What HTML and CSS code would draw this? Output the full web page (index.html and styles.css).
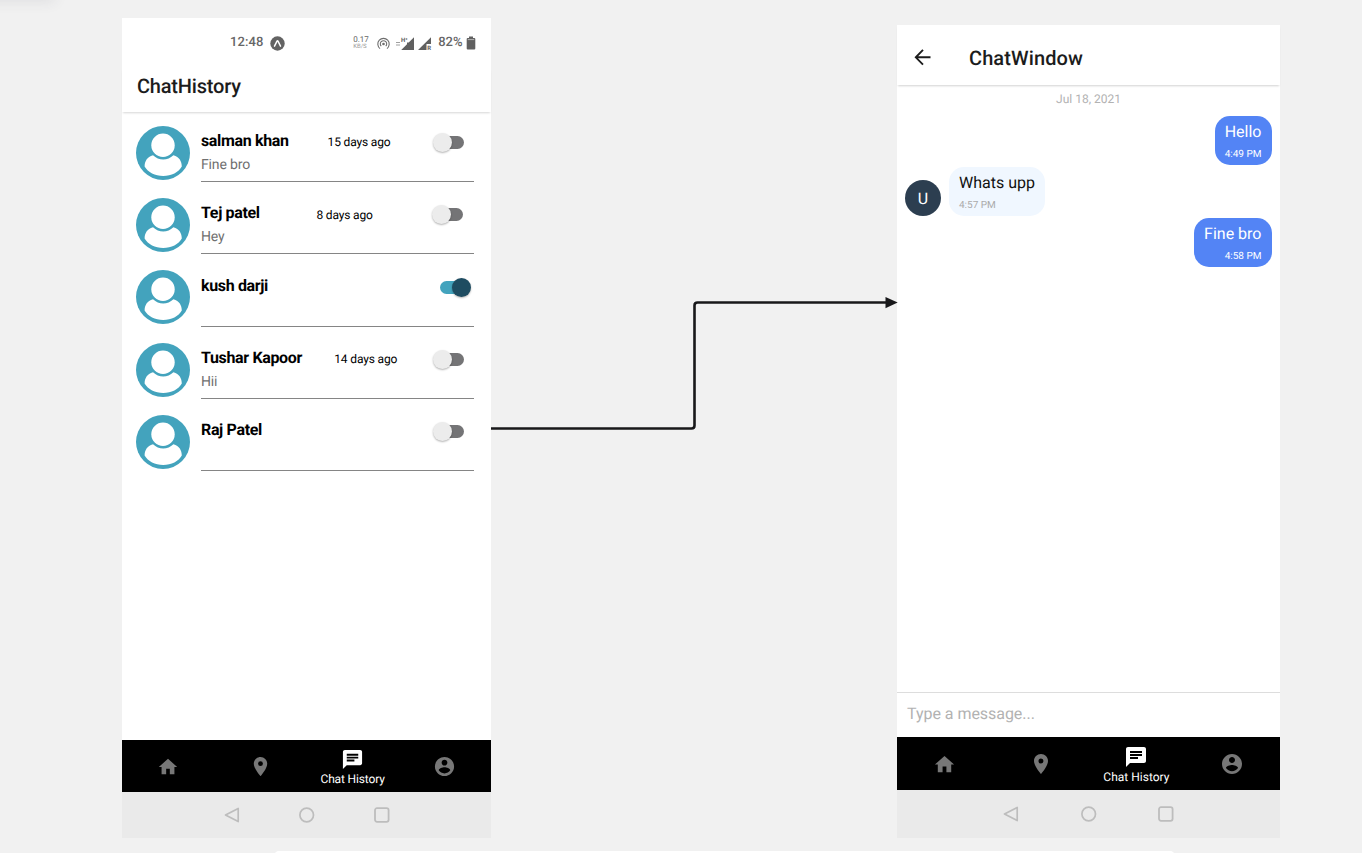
FILE: index.html
```
<!DOCTYPE html>
<html lang="en">
<head>
<meta charset="utf-8">
<title>Chat flow</title>
<link rel="stylesheet" href="styles.css">
</head>
<body>
<svg class="defs" width="0" height="0">
  <symbol id="avatar" viewBox="0 0 54 54">
    <circle cx="27" cy="27" r="27" fill="#43a3bd"/>
    <circle cx="27" cy="19.300" r="11.700" fill="#fff"/>
    <path d="M17 29.300C11 31 8.600 35.500 8.600 40.500C12 46.300 19 50 27.200 50S42.600 46.300 45.800 40.500C45.800 35.500 43.400 31 37.400 29.300C34.500 32 31 33.600 27.200 33.600S20 32 17 29.300Z" fill="#fff"/>
  </symbol>
  <symbol id="home" viewBox="0 0 24 24"><path d="M10 20v-6h4v6h5v-8h3L12 3 2 12h3v8z"/></symbol>
  <symbol id="pin" viewBox="0 0 24 24"><path d="M12 2C8.130 2 5 5.130 5 9c0 5.250 7 13 7 13s7-7.750 7-13c0-3.870-3.130-7-7-7zm0 9.500a2.500 2.500 0 1 1 0-5 2.500 2.500 0 0 1 0 5z"/></symbol>
  <symbol id="chat" viewBox="0 0 24 24"><path d="M20 2H4c-1.100 0-1.990.9-1.990 2L2 22l4-4h14c1.100 0 2-.9 2-2V4c0-1.100-.9-2-2-2zM6 9h12v2H6V9zm8 5H6v-2h8v2zm4-6H6V6h12v2z"/></symbol>
  <symbol id="account" viewBox="0 0 24 24"><path d="M12 2C6.480 2 2 6.480 2 12s4.480 10 10 10 10-4.480 10-10S17.520 2 12 2zm0 3c1.660 0 3 1.340 3 3s-1.340 3-3 3-3-1.340-3-3 1.340-3 3-3zm0 14.200c-2.500 0-4.710-1.280-6-3.220.03-1.990 4-3.080 6-3.080 1.990 0 5.970 1.090 6 3.080-1.290 1.940-3.500 3.220-6 3.220z"/></symbol>
  <symbol id="nav-back" viewBox="0 0 16 16"><path d="M14.200 1.400V14.600L1.500 8Z" fill="none" stroke="#bdbdbd" stroke-width="1.700" stroke-linejoin="round"/></symbol>
  <symbol id="nav-home" viewBox="0 0 16 16"><circle cx="7.700" cy="8" r="6.800" fill="none" stroke="#bdbdbd" stroke-width="1.700"/></symbol>
  <symbol id="nav-recent" viewBox="0 0 16 16"><rect x="1" y="1.200" width="13.600" height="13.600" rx="2" fill="none" stroke="#bdbdbd" stroke-width="1.800"/></symbol>
</svg>

<main class="canvas">
  <div class="corner-shadow"></div>

  <section class="phone phone-history">
    <div class="status">
      <div class="status-left">
        <span class="clock">12:48</span>
        <svg width="15" height="15" viewBox="0 0 15 15"><circle cx="7.500" cy="7.500" r="7.200" fill="#636363"/><path d="M4.500 10.200L7 5.200Q7.500 4.500 8 5.200L10.500 10.200" fill="none" stroke="#fff" stroke-width="1.500" stroke-linecap="round"/></svg>
      </div>
      <div class="status-right">
        <div class="speed"><span>0.17</span><span class="unit">KB/S</span></div>
        <svg class="hotspot" width="13" height="13" viewBox="0 0 13 13" fill="none" stroke="#6d6d6d"><circle cx="6.500" cy="7" r="1.300" fill="#6d6d6d" stroke="none"/><path d="M4.300 9.200A3.200 3.200 0 1 1 8.700 9.200M3 11.600A5.700 5.700 0 1 1 10 11.600" stroke-width="1.100"/></svg>
        <svg class="signal-one" width="20" height="15" viewBox="0 0 20 15"><path d="M1 6.500h4M1 9h4" stroke="#a0a0a0"/><path d="M19 1.200V14H6.200L12 8.200V6.500H13.700Z" fill="#606060"/><text x="6" y="6" class="signal-label">H⁺</text></svg>
        <svg class="signal-two" width="14" height="15" viewBox="0 0 14 15"><path d="M13 1.200V8H8.500v6H0Z" fill="#606060"/><text x="9.200" y="14" class="signal-label">R</text></svg>
        <span class="charge">82%</span>
        <svg class="battery" width="10" height="14" viewBox="0 0 10 14"><path d="M3 .5h4V2h1.200Q9.300 2 9.300 3V12.500Q9.300 13.500 8.200 13.500H1.800Q.7 13.500 .7 12.500V3Q.7 2 1.800 2H3Z" fill="#606060"/><path d="M1.800 3.600h6.400" stroke="#bbb" stroke-width=".9"/></svg>
      </div>
    </div>
    <h1 class="title">ChatHistory</h1>
    <div class="list">
      <article class="row">
        <svg class="avatar"><use href="#avatar"/></svg>
        <div class="row-body">
          <div class="row-top"><span class="name">salman khan</span><time class="ago">15 days ago</time><span class="switch"></span></div>
          <p class="preview">Fine bro</p>
        </div>
      </article>
      <article class="row">
        <svg class="avatar"><use href="#avatar"/></svg>
        <div class="row-body">
          <div class="row-top"><span class="name">Tej patel</span><time class="ago">8 days ago</time><span class="switch"></span></div>
          <p class="preview">Hey</p>
        </div>
      </article>
      <article class="row">
        <svg class="avatar"><use href="#avatar"/></svg>
        <div class="row-body">
          <div class="row-top"><span class="name">kush darji</span><span class="switch on"></span></div>
        </div>
      </article>
      <article class="row">
        <svg class="avatar"><use href="#avatar"/></svg>
        <div class="row-body">
          <div class="row-top"><span class="name">Tushar Kapoor</span><time class="ago">14 days ago</time><span class="switch"></span></div>
          <p class="preview">Hii</p>
        </div>
      </article>
      <article class="row">
        <svg class="avatar"><use href="#avatar"/></svg>
        <div class="row-body">
          <div class="row-top"><span class="name">Raj Patel</span><span class="switch"></span></div>
        </div>
      </article>
    </div>
    <nav class="tabs">
      <span class="tab"><svg class="icon icon-home"><use href="#home"/></svg></span>
      <span class="tab"><svg class="icon"><use href="#pin"/></svg></span>
      <span class="tab active"><svg class="icon"><use href="#chat"/></svg><span class="tab-label">Chat History</span></span>
      <span class="tab"><svg class="icon"><use href="#account"/></svg></span>
    </nav>
    <div class="system-nav"><svg><use href="#nav-back"/></svg><svg><use href="#nav-home"/></svg><svg><use href="#nav-recent"/></svg></div>
  </section>

  <section class="phone phone-window">
    <header class="window-head">
      <svg class="back" width="18" height="18" viewBox="0 0 18 18" fill="none" stroke="#1c1c1c" stroke-width="1.900"><path d="M16.500 8.300H2M9 .9L1.800 8.300l7.200 7.400"/></svg>
      <h1 class="window-title">ChatWindow</h1>
    </header>
    <div class="messages">
      <p class="date">Jul 18, 2021</p>
      <div class="message sent"><div class="bubble"><p>Hello</p><time>4:49 PM</time></div></div>
      <div class="message received"><span class="initial">U</span><div class="bubble"><p>Whats upp</p><time>4:57 PM</time></div></div>
      <div class="message sent"><div class="bubble"><p>Fine bro</p><time>4:58 PM</time></div></div>
    </div>
    <div class="composer">Type a message...</div>
    <nav class="tabs">
      <span class="tab"><svg class="icon icon-home"><use href="#home"/></svg></span>
      <span class="tab"><svg class="icon"><use href="#pin"/></svg></span>
      <span class="tab active"><svg class="icon"><use href="#chat"/></svg><span class="tab-label">Chat History</span></span>
      <span class="tab"><svg class="icon"><use href="#account"/></svg></span>
    </nav>
    <div class="system-nav"><svg><use href="#nav-back"/></svg><svg><use href="#nav-home"/></svg><svg><use href="#nav-recent"/></svg></div>
  </section>

  <svg class="connector" width="408" height="142" viewBox="0 0 408 142">
    <path d="M0 133.500H200.500Q203.500 133.500 203.500 130.500V10.500Q203.500 7.500 206.500 7.500H396" fill="none" stroke="#18181a" stroke-width="2.600"/>
    <path d="M394.500 2L406.700 7.500 394.500 13.200Z" fill="#18181a"/>
  </svg>
  <div class="bottom-bar"></div>
</main>
</body>
</html>
```
FILE: styles.css
```
* { box-sizing: border-box; }
body { margin: 0; font-family: Roboto, sans-serif; background: #f1f1f1; text-rendering: geometricPrecision; }
h1, p { margin: 0; font-weight: 400; }
.defs { position: absolute; }
.canvas { position: relative; width: 1362px; height: 853px; overflow: hidden; background: #f1f1f1; }
.corner-shadow { position: absolute; left: -20px; top: -12px; width: 72px; height: 10px; box-shadow: 0 1px 14px 3px rgba(50, 50, 75, .09); }
.bottom-bar { position: absolute; left: 274px; top: 851px; width: 901px; height: 12px; border-radius: 5px; background: #fff; }
.connector { position: absolute; left: 491px; top: 295px; }

.phone { position: absolute; display: flex; flex-direction: column; background: #fff; }
.phone-history { left: 122px; top: 18px; width: 369px; height: 820px; }
.phone-window { left: 897px; top: 25px; width: 383px; height: 813px; }

.status { height: 50px; padding: 0 15.500px 0 108px; display: flex; align-items: center; justify-content: space-between; color: #666; font-size: 13px; line-height: 16px; font-weight: 500; letter-spacing: .1px; }
.status-left, .status-right { display: flex; align-items: center; }
.status-left { gap: 7px; }
.speed { display: flex; flex-direction: column; width: 16px; font-size: 8px; line-height: 8px; font-weight: 400; letter-spacing: 0; }
.unit { font-size: 6px; line-height: 6px; color: #999; }
.hotspot { margin-left: 7.500px; }
.signal-one { margin-left: 5.500px; }
.signal-two { margin-left: 3px; }
.signal-label { font-size: 6px; font-weight: 700; fill: #606060; letter-spacing: 0; }
.charge { margin-left: 6px; letter-spacing: 0; }
.battery { margin-left: 3px; }

.title { height: 44px; padding-left: 15px; line-height: 36px; font-size: 20px; font-weight: 500; letter-spacing: -.2px; color: #1c1c1c; box-shadow: 0 2px 2px -1px rgba(0, 0, 0, .16); }
.list { flex: 1; padding: 13.200px 17px 0 13.500px; display: flex; flex-direction: column; gap: 15.300px; }
.row { display: flex; gap: 11.500px; height: 57px; flex: none; }
.avatar { width: 54px; height: 54px; flex: none; margin-top: .5px; }
.row-body { flex: 1; border-bottom: 1px solid #858585; }
.row-top { display: flex; justify-content: space-between; align-items: center; height: 31px; }
.name { font-size: 16px; font-weight: 700; letter-spacing: -.35px; color: #000; }
.ago { font-size: 12px; letter-spacing: -.15px; color: #000; padding-top: 3.500px; }
.preview { font-size: 14px; line-height: 19.500px; letter-spacing: -.15px; color: #707070; }
.switch { display: flex; align-items: center; width: 44.500px; height: 20px; margin-top: 4px; padding-left: 10px; }
.switch::before { content: ""; width: 24px; height: 13px; border-radius: 7px; background: #747476; }
.switch::after { content: ""; width: 19px; height: 19px; margin-left: -31px; border-radius: 50%; background: #ececec; box-shadow: 0 1px 2px rgba(0, 0, 0, .3); }
.switch.on::before { background: #43a3bd; }
.switch.on::after { margin-left: -12px; background: #1e4c61; }

.tabs { display: flex; height: 52px; background: #000; color: #777; }
.tab { flex: 1; display: flex; flex-direction: column; align-items: center; justify-content: center; }
.icon { width: 23px; height: 23px; fill: currentColor; }
.icon-home { width: 22px; height: 22px; margin-top: 1px; }
.active { color: #fff; justify-content: flex-start; padding-top: 7.500px; }
.tab-label { font-size: 12px; line-height: 15px; margin-top: 1px; letter-spacing: -.15px; }
.system-nav { display: flex; justify-content: center; align-items: center; gap: 59px; height: 46px; background: #eaeaea; }
.system-nav svg { width: 16px; height: 16px; }

.window-head { display: flex; align-items: center; height: 60px; padding: 5px 17px 0; gap: 37px; box-shadow: 0 2px 2px -1px rgba(0, 0, 0, .18); }
.window-title { font-size: 20px; font-weight: 500; letter-spacing: .1px; color: #1c1c1c; }
.messages { flex: 1; padding: 6px 8px 5px; display: flex; flex-direction: column; gap: 2px; }
.date { height: 23px; line-height: 16px; text-align: center; font-size: 12px; color: #b2b2b2; }
.message { display: flex; align-items: flex-end; gap: 8px; }
.sent { justify-content: flex-end; }
.bubble { height: 49px; padding: 6px 10px 0; border-radius: 15px; background: #f0f7ff; color: #111; font-size: 16px; line-height: 20px; display: flex; flex-direction: column; }
.bubble time { margin-top: 5px; font-size: 10px; line-height: 16px; color: #aaa; }
.sent .bubble { padding-right: 10.500px; background: #5384f5; color: #fff; align-items: flex-end; }
.sent time { color: #fff; }
.initial { width: 36px; height: 36px; border-radius: 50%; background: #2c3e50; color: #fff; font-size: 16px; line-height: 37px; text-align: center; }
.composer { height: 44.500px; border-top: 1px solid #ddd; padding-left: 10px; line-height: 42px; font-size: 16px; letter-spacing: -.04px; color: #b2b2b2; }
.phone-window .tabs { height: 53.500px; }
.phone-window .tab { padding-top: 1px; }
.phone-window .active { padding-top: 8px; }
.phone-window .system-nav { height: 48px; gap: 61.500px; }
.phone-window .icon { width: 24px; height: 24px; }
.phone-window .icon-home { width: 23px; height: 23px; }
.phone-window .tab-label { font-size: 12px; letter-spacing: 0; }
```
